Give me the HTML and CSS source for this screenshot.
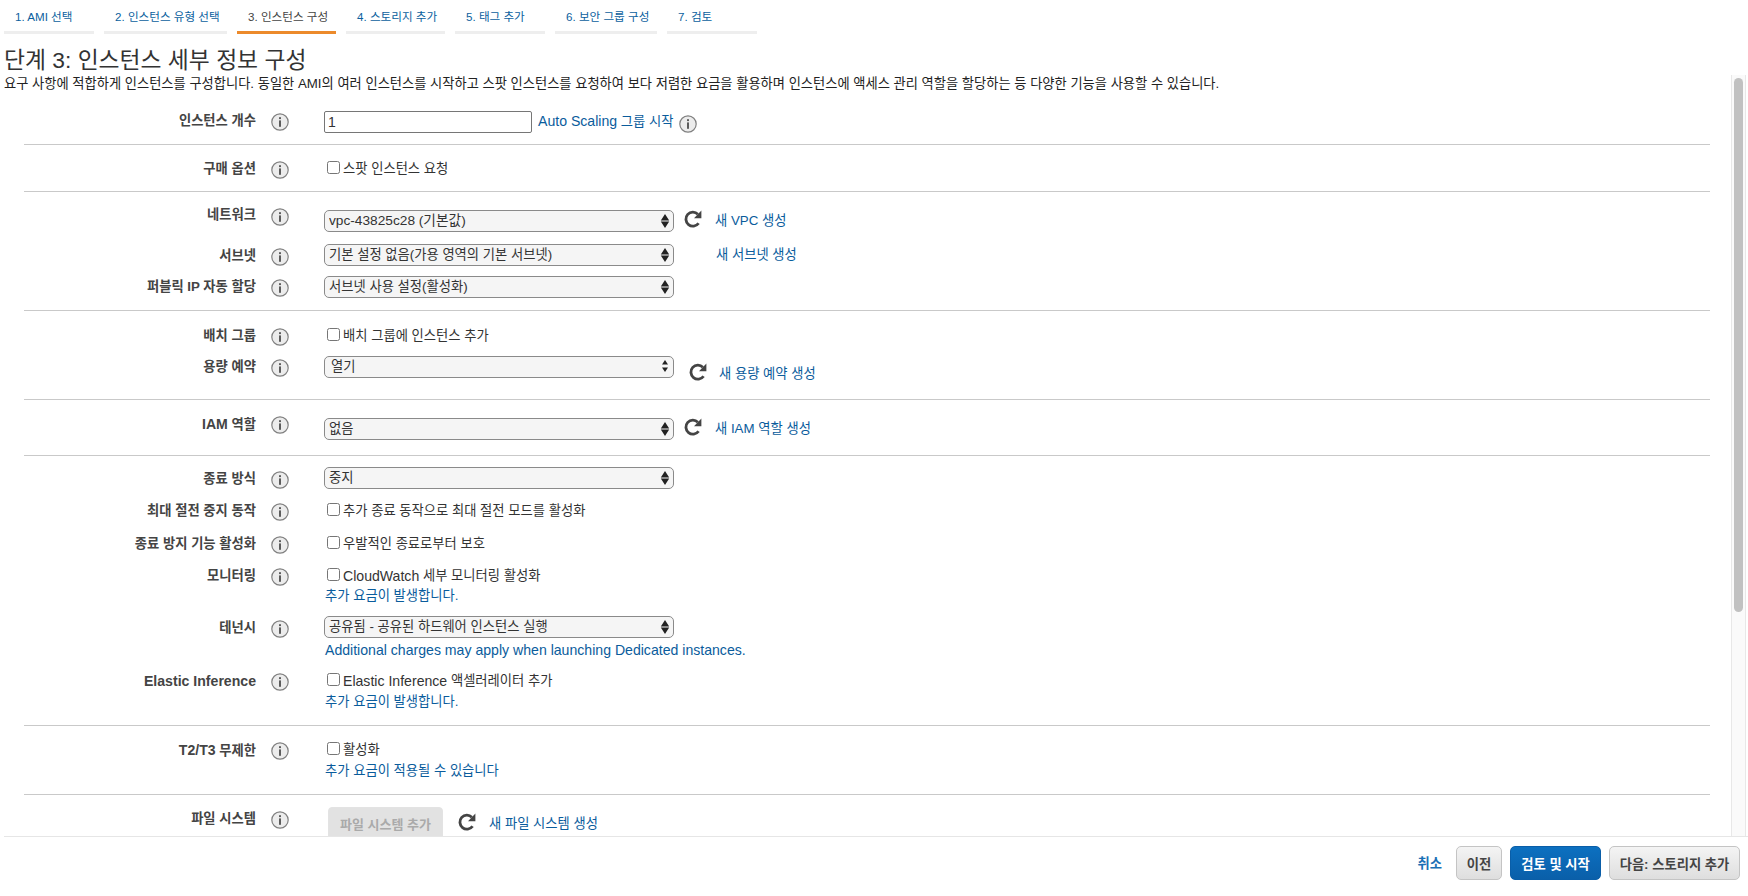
FILE: index.html
```html
<!DOCTYPE html>
<html lang="ko">
<head>
<meta charset="utf-8">
<title>인스턴스 구성</title>
<link rel="stylesheet" href="styles.css">
</head>
<body>
<svg class="defs" width="0" height="0" aria-hidden="true">
  <symbol id="info" viewBox="0 0 18 18">
    <circle cx="9" cy="9" r="8.2" fill="#ececec" stroke="#808080" stroke-width="1.2"/>
    <rect x="8.1" y="7.4" width="1.8" height="6.4" fill="#4d4d4d"/>
    <rect x="8.1" y="4.2" width="1.8" height="1.9" fill="#4d4d4d"/>
  </symbol>
  <symbol id="refresh" viewBox="0 0 20 20">
    <path d="M15.6 14.2A7 7 0 1 1 14.9 5.2" fill="none" stroke="#444" stroke-width="2.8"/>
    <path d="M18.4 1.6V9.2H11Z" fill="#444"/>
  </symbol>
  <symbol id="arrows" viewBox="0 0 10 16">
    <path d="M5 1L9.2 7.4H.8Z M5 15L.8 8.6H9.2Z" fill="#222"/>
  </symbol>
  <symbol id="arrows-small" viewBox="0 0 10 16">
    <path d="M5 2L8 6.5H2Z M5 14L2 9.5H8Z" fill="#222"/>
  </symbol>
</svg>
<div class="page">
  <nav class="tabs">
    <a class="tab t1">1. AMI 선택</a>
    <a class="tab t2">2. 인스턴스 유형 선택</a>
    <a class="tab t3 active">3. 인스턴스 구성</a>
    <a class="tab t4">4. 스토리지 추가</a>
    <a class="tab t5">5. 태그 추가</a>
    <a class="tab t6">6. 보안 그룹 구성</a>
    <a class="tab t7">7. 검토</a>
  </nav>
  <h1 class="title">단계 3: 인스턴스 세부 정보 구성</h1>
  <main class="scroller">
    <div class="scrollbar"><div class="thumb"></div></div>
    <p class="desc">요구 사항에 적합하게 인스턴스를 구성합니다. 동일한 AMI의 여러 인스턴스를 시작하고 스팟 인스턴스를 요청하여 보다 저렴한 요금을 활용하며 인스턴스에 액세스 관리 역할을 할당하는 등 다양한 기능을 사용할 수 있습니다.</p>
    <div class="form">
      <section class="group g-count">
        <div class="row">
          <div class="label">인스턴스 개수</div><svg class="info"><use href="#info"/></svg>
          <div class="control"><input class="text-input" type="text" value="1"><a class="link as-link"><span class="en">Auto Scaling</span> 그룹 시작</a><svg class="info info-inline"><use href="#info"/></svg></div>
        </div>
      </section>
      <section class="group g-buy">
        <div class="row">
          <div class="label">구매 옵션</div><svg class="info"><use href="#info"/></svg>
          <div class="control"><label class="check"><input type="checkbox">스팟 인스턴스 요청</label></div>
        </div>
      </section>
      <section class="group g-net">
        <div class="row h-net">
          <div class="label">네트워크</div><svg class="info info-net"><use href="#info"/></svg>
          <div class="control ctl-net"><div class="select"><select class="sel-en"><option>vpc-43825c28 (기본값)</option></select><svg class="arrows"><use href="#arrows"/></svg></div><svg class="refresh"><use href="#refresh"/></svg><a class="link net-link">새 VPC 생성</a></div>
        </div>
        <div class="row h-sub">
          <div class="label">서브넷</div><svg class="info"><use href="#info"/></svg>
          <div class="control ctl-up3"><div class="select"><select><option>기본 설정 없음(가용 영역의 기본 서브넷)</option></select><svg class="arrows"><use href="#arrows"/></svg></div><a class="link sub-link">새 서브넷 생성</a></div>
        </div>
        <div class="row">
          <div class="label">퍼블릭 IP 자동 할당</div><svg class="info"><use href="#info"/></svg>
          <div class="control ctl-up2"><div class="select"><select><option>서브넷 사용 설정(활성화)</option></select><svg class="arrows"><use href="#arrows"/></svg></div></div>
        </div>
      </section>
      <section class="group g-place">
        <div class="row h-place">
          <div class="label">배치 그룹</div><svg class="info"><use href="#info"/></svg>
          <div class="control"><label class="check"><input type="checkbox">배치 그룹에 인스턴스 추가</label></div>
        </div>
        <div class="row">
          <div class="label">용량 예약</div><svg class="info"><use href="#info"/></svg>
          <div class="control ctl-up2"><div class="select"><select class="open-sel"><option>열기</option></select><svg class="arrows small"><use href="#arrows-small"/></svg></div><svg class="refresh ref-cap"><use href="#refresh"/></svg><a class="link cap-link">새 용량 예약 생성</a></div>
        </div>
      </section>
      <section class="group g-iam">
        <div class="row">
          <div class="label"><span class="en">IAM</span> 역할</div><svg class="info"><use href="#info"/></svg>
          <div class="control ctl-iam"><div class="select"><select><option>없음</option></select><svg class="arrows"><use href="#arrows"/></svg></div><svg class="refresh"><use href="#refresh"/></svg><a class="link iam-link">새 IAM 역할 생성</a></div>
        </div>
      </section>
      <section class="group g-misc">
        <div class="row r-stop">
          <div class="label">종료 방식</div><svg class="info"><use href="#info"/></svg>
          <div class="control ctl-up3"><div class="select"><select><option>중지</option></select><svg class="arrows"><use href="#arrows"/></svg></div></div>
        </div>
        <div class="row r-hib">
          <div class="label">최대 절전 중지 동작</div><svg class="info"><use href="#info"/></svg>
          <div class="control"><label class="check"><input type="checkbox">추가 종료 동작으로 최대 절전 모드를 활성화</label></div>
        </div>
        <div class="row r-prot">
          <div class="label">종료 방지 기능 활성화</div><svg class="info"><use href="#info"/></svg>
          <div class="control"><label class="check"><input type="checkbox">우발적인 종료로부터 보호</label></div>
        </div>
        <div class="row r-mon">
          <div class="label">모니터링</div><svg class="info"><use href="#info"/></svg>
          <div class="control stack"><label class="check"><input type="checkbox"><span class="en">CloudWatch</span>&nbsp;세부 모니터링 활성화</label><a class="link note">추가 요금이 발생합니다.</a></div>
        </div>
        <div class="row r-ten">
          <div class="label">테넌시</div><svg class="info"><use href="#info"/></svg>
          <div class="control stack ctl-up3"><div class="select"><select><option>공유됨 - 공유된 하드웨어 인스턴스 실행</option></select><svg class="arrows"><use href="#arrows"/></svg></div><a class="link note note-sel"><span class="en">Additional charges may apply when launching Dedicated instances.</span></a></div>
        </div>
        <div class="row">
          <div class="label"><span class="en">Elastic Inference</span></div><svg class="info"><use href="#info"/></svg>
          <div class="control stack"><label class="check"><input type="checkbox"><span class="en">Elastic Inference</span>&nbsp;액셀러레이터 추가</label><a class="link note note-el">추가 요금이 발생합니다.</a></div>
        </div>
      </section>
      <section class="group g-t2">
        <div class="row">
          <div class="label"><span class="en">T2/T3</span> 무제한</div><svg class="info"><use href="#info"/></svg>
          <div class="control stack"><label class="check"><input type="checkbox">활성화</label><a class="link note note-el">추가 요금이 적용될 수 있습니다</a></div>
        </div>
      </section>
      <section class="group g-fs">
        <div class="row">
          <div class="label">파일 시스템</div><svg class="info"><use href="#info"/></svg>
          <div class="control fs-ctl"><button class="btn-disabled" type="button" disabled>파일 시스템 추가</button><svg class="refresh ref-fs"><use href="#refresh"/></svg><a class="link">새 파일 시스템 생성</a></div>
        </div>
      </section>
    </div>
  </main>
  <footer class="footer">
    <a class="cancel">취소</a>
    <button class="btn b-prev" type="button">이전</button>
    <button class="btn primary" type="button">검토 및 시작</button>
    <button class="btn b-next" type="button">다음: 스토리지 추가</button>
  </footer>
</div>
</body>
</html>
```
FILE: styles.css
```css
* { box-sizing: border-box; }
html, body { margin: 0; height: 100%; overflow: hidden; background: #fff; }
body { font-family: "Liberation Sans", "Noto Sans CJK KR", sans-serif; font-size: 13.3px; color: #333; }
.defs { position: absolute; }
.page { width: 1748px; height: 896px; display: flex; flex-direction: column; }
.en { font-size: 14.1px; }

.tabs { display: flex; gap: 10px; padding-left: 4px; height: 34px; flex: none; }
.tab { display: block; height: 34px; padding: 10px 0 0 11px; font-size: 11.6px; line-height: 14px; color: #0b5f9e; border-bottom: 3px solid #eee; }
.t1 { width: 90px; } .t2 { width: 123px; } .t3 { width: 99px; } .t4 { width: 99px; }
.t5 { width: 90px; } .t6 { width: 102px; } .t7 { width: 90px; }
.tab.active { color: #444; border-bottom-color: #ec8a2b; font-weight: 400; }

.title { margin: 12px 0 0 4px; font-size: 22.8px; line-height: 28px; font-weight: 400; color: #333; flex: none; }

.scroller { position: relative; flex: 1; overflow: hidden; margin: 1px 0 0 4px; border-bottom: 1px solid #e6e6e6; padding-top: 1px; min-height: 0; }
.desc { margin: 0; font-size: 13.25px; line-height: 16px; color: #222; white-space: nowrap; }
.scrollbar { position: absolute; left: 1727px; top: 0; width: 15px; bottom: 0; background: #fafafa; border-left: 1px solid #e8e8e8; border-right: 1px solid #e8e8e8; }
.thumb { margin: 3px 2px 0; height: 534px; background: #c1c1c1; border-radius: 6px; }

.form { margin: 18px 0 0 20px; width: 1686px; }
.group { border-bottom: 1px solid #c9c9c9; }
.g-count { padding-top: 2px; height: 35px; }
.g-buy { padding-top: 15px; height: 47px; }
.g-net { padding-top: 14px; height: 119px; }
.g-place { padding-top: 16px; height: 89px; }
.g-iam { padding-top: 15px; height: 56px; }
.g-misc { padding-top: 14px; height: 270px; }
.g-t2 { padding-top: 15px; height: 69px; }
.g-fs { padding-top: 15px; border-bottom: 0; }

.row { display: flex; align-items: flex-start; }
.h-net { height: 41px; } .h-sub { height: 31px; } .h-place { height: 31px; }
.r-stop { height: 32px; } .r-hib { height: 33px; } .r-prot { height: 32px; } .r-mon { height: 52px; } .r-ten { height: 53px; }

.label { width: 232px; flex: none; text-align: right; font-weight: 700; font-size: 13.3px; line-height: 18px; color: #444; white-space: nowrap; }
.info { flex: none; width: 18px; height: 18px; margin: 1px 0 0 15px; }
.info-net { margin-top: 2px; }
.control { margin-left: 35px; display: flex; align-items: flex-start; font-size: 13.3px; line-height: 18px; }
.ctl-net { padding-top: 4px; }
.ctl-iam { padding-top: 3px; }
.ctl-up2 { margin-top: -2px; }
.ctl-up3 { margin-top: -3px; }
.stack { flex-direction: column; }

.text-input { width: 208px; height: 22px; margin: -1px 0 0 0; padding: 0 0 0 3px; border: 1px solid #767676; border-radius: 2px; font: 14px "Liberation Sans", sans-serif; color: #333; background: #fff; }
.info-inline { margin: 3px 0 0 6px; }

.link { color: #0a5c9c; white-space: nowrap; }
.as-link { margin-left: 6px; }
.note { margin-top: 2px; padding-left: 1px; }
.note-sel { margin-top: 3px; }
.note-el { margin-top: 3px; }
.net-link { margin-top: 2px; }
.iam-link { margin-top: 2px; }
.sub-link { margin: 2px 0 0 42px; }
.cap-link { margin-top: 9px; }

.check { display: flex; align-items: flex-start; color: #333; white-space: nowrap; }
.check input { width: 13px; height: 13px; margin: 1px 3px 0 3px; appearance: none; border: 1px solid #767676; border-radius: 2.5px; background: #fff; }

.select { position: relative; width: 350px; height: 22px; flex: none; }
.select select { display: block; width: 100%; height: 100%; appearance: none; border: 1px solid #8a8a8a; border-radius: 5px; background: #f5f5f5; padding: 0 20px 0 4px; font: inherit; color: #333; }
.select .open-sel { padding-left: 6px; }
.select .sel-en { font-size: 13.7px; }
.arrows { position: absolute; right: 4px; top: 3px; width: 10px; height: 16px; }
.arrows.small { top: 2px; }

.refresh { flex: none; width: 20px; height: 20px; margin: -1px 12px 0 9px; }
.ref-cap { margin: 6px 11px 0 14px; }
.ref-fs { margin: 5px 12px 0 14px; }

.fs-ctl { padding-left: 4px; margin-top: -3px; height: 40px; }
.fs-ctl .link { margin-top: 8px; }
.btn-disabled { width: 115px; height: 33px; border: 1px solid #e3e3e3; border-radius: 4px; background: #e2e2e2; color: #aaa; font: 700 13px "Liberation Sans", "Noto Sans CJK KR", sans-serif; padding: 0; }

.footer { flex: none; height: 59px; display: flex; align-items: flex-start; justify-content: flex-end; gap: 8px; padding: 9px 8px 0 0; background: #fff; }
.cancel { color: #1a6fb5; font-weight: 700; font-size: 13.3px; line-height: 35px; margin-right: 6px; }
.btn { width: 91px; height: 34px; padding: 0; border: 1px solid #c4c4c4; border-radius: 5px; background: linear-gradient(#f4f4f4, #dedede); font: 700 13.3px "Liberation Sans", "Noto Sans CJK KR", sans-serif; color: #444; white-space: nowrap; }
.b-prev { width: 46px; }
.b-next { width: 131px; }
.btn.primary { border-color: #0a5ea8; background: linear-gradient(#0c70c0, #0a5fa9); color: #fff; }
```
